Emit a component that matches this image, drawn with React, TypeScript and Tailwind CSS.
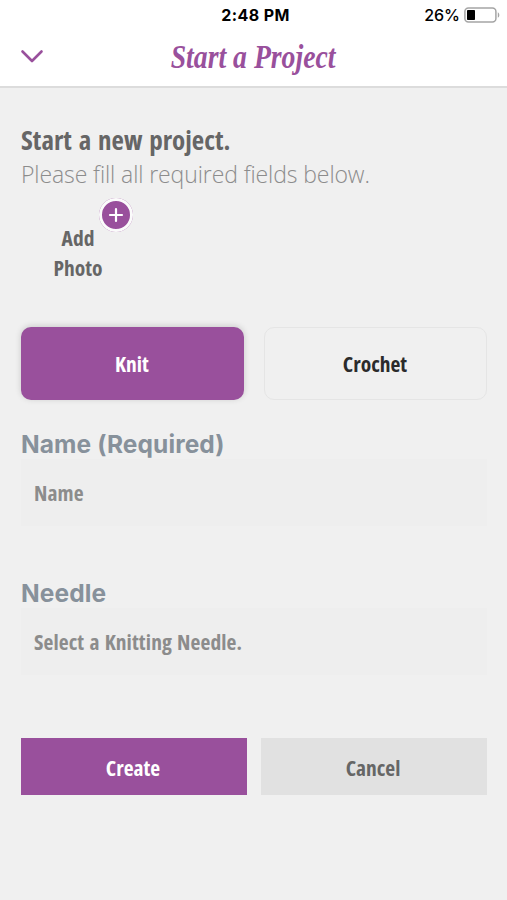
import { useState } from "react";

const condensed = "font-['Open_Sans',sans-serif] font-stretch-condensed font-bold";

export default function App() {
  const [craft, setCraft] = useState<"knit" | "crochet">("knit");

  return (
    <div className="flex h-[900px] w-[507px] flex-col overflow-hidden bg-[#f0f0f0]">
      <StatusBar />
      <Header />

      <main className="pl-[21px] pr-5 pt-[34px]">
        <h2 className={`h-9 whitespace-nowrap text-[27px] leading-9 text-[#666] [word-spacing:2px] ${condensed}`}>
          Start a new project.
        </h2>
        <p className="h-8 whitespace-nowrap font-['Open_Sans',sans-serif] text-[23px] font-light leading-8 tracking-[-0.1px] text-[#8c8c8c]">
          Please fill all required fields below.
        </p>

        <AddPhoto />

        <div className="mt-6 grid grid-cols-2 gap-5">
          <CraftBtn active={craft === "knit"} onClick={() => setCraft("knit")}>Knit</CraftBtn>
          <CraftBtn active={craft === "crochet"} onClick={() => setCraft("crochet")}>Crochet</CraftBtn>
        </div>

        <Field label="Name (Required)" placeholder="Name" />
        <Field label="Needle" placeholder="Select a Knitting Needle." />

        <div className="mt-10 grid grid-cols-2 gap-[14px]">
          <button className={`h-[57px] bg-[#99509c] pr-0.5 pt-[3px] text-[21.5px] text-white ${condensed}`}>Create</button>
          <button className={`h-[57px] bg-[#e1e1e1] pr-0.5 pt-[3px] text-[21.5px] text-[#666] ${condensed}`}>Cancel</button>
        </div>
      </main>
    </div>
  );
}

function StatusBar() {
  return (
    <div className="grid h-7 shrink-0 grid-cols-3 items-center bg-white pl-1 pt-px font-['Inter',sans-serif] text-black">
      <span className="col-start-2 text-center text-[16px] font-bold tracking-[0.4px]">2:48 PM</span>
      <div className="flex items-center justify-end gap-1 pr-[7px]">
        <span className="text-[16px] font-medium">26%</span>
        <svg width="36" height="16" viewBox="0 0 36 16" fill="none">
          <rect x="0.9" y="0.9" width="31" height="14" rx="3.5" stroke="#a5a5a5" strokeWidth="1.5" />
          <rect x="3" y="3" width="8" height="10" rx="0.8" fill="#000" />
          <path d="M33.8 5.2c2 1 2 4.6 0 5.6z" fill="#a5a5a5" />
        </svg>
      </div>
    </div>
  );
}

function Header() {
  return (
    <header className="grid h-[60px] shrink-0 grid-cols-[64px_1fr_64px] items-center border-b-2 border-[#dcdcdc] bg-white">
      <button className="flex justify-center" aria-label="Close">
        <svg width="24" height="16" viewBox="0 0 24 16" fill="none">
          <path d="M2.5 2.5 12 12l9.5-9.5" stroke="#99509c" strokeWidth="2.6" strokeLinecap="round" strokeLinejoin="round" />
        </svg>
      </button>
      <h1 className="flex justify-center whitespace-nowrap">
        <span className="origin-center scale-x-[0.84] font-['Liberation_Serif',serif] text-[33px] font-bold italic leading-none text-[#99509c]">
          Start a Project
        </span>
      </h1>
    </header>
  );
}

function AddPhoto() {
  return (
    <div className={`relative mt-2 h-[105px] w-[114px] pt-[25px] text-center text-[21.5px] leading-[30px] text-[#666] ${condensed}`}>
      <div>Add</div>
      <div>Photo</div>
      <span className="absolute right-[2px] top-0 grid size-[34px] place-items-center rounded-full bg-[#99509c] ring-3 ring-inset ring-[#fbfbfb]">
        <svg width="16" height="16" viewBox="0 0 16 16">
          <path d="M8 2v12M2 8h12" stroke="#fff" strokeWidth="2.2" strokeLinecap="round" />
        </svg>
      </span>
    </div>
  );
}

function CraftBtn({ active, onClick, children }: any) {
  return (
    <button
      onClick={onClick}
      className={`h-[73px] rounded-[10px] pr-px pt-0.5 text-[21.5px] ${condensed} ${
        active ? "bg-[#99509c] text-white shadow-[0_-1px_6px_rgba(0,0,0,0.16)]" : "border border-[#e5e5e5] text-[#2b2b2b]"
      }`}
    >
      {children}
    </button>
  );
}

function Field({ label, placeholder }: { label: string; placeholder: string }) {
  return (
    <div className="h-[149px] pt-[28px]">
      <div className="h-[31px] font-['Inter',sans-serif] text-[24.5px] font-bold leading-[33px] tracking-[0.1px] text-[#87919b]">
        {label}
      </div>
      <div className={`flex h-[67px] items-center bg-[#eeeeee] px-[13px] pt-px text-[21.5px] tracking-[0.1px] text-[#8c8c8c] [word-spacing:1.2px] ${condensed}`}>
        {placeholder}
      </div>
    </div>
  );
}
